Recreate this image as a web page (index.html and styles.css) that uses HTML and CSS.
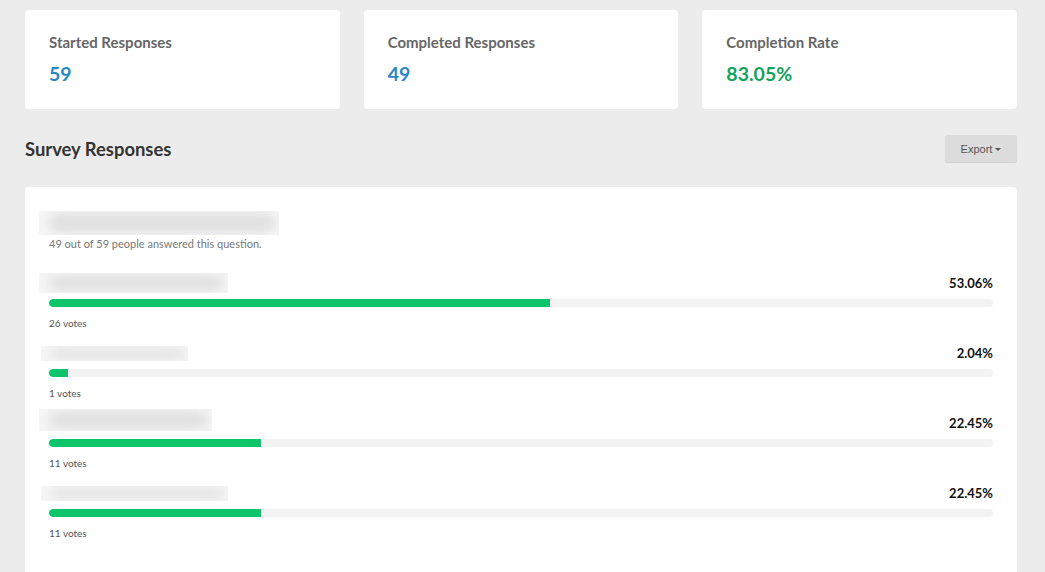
FILE: index.html
```html
<!DOCTYPE html>
<html>
  <head>
    <meta http-equiv="Content-Type" content="text/html; charset=UTF-8">
    <title>Survey Responses</title>
    <link rel="stylesheet" href="styles.css">
  </head>
  <body>
    <div class="stats">
      <div class="stat">
        <div class="stat_label">Started Responses</div>
        <div class="stat_value">59</div>
      </div>
      <div class="stat">
        <div class="stat_label">Completed Responses</div>
        <div class="stat_value">49</div>
      </div>
      <div class="stat">
        <div class="stat_label">Completion Rate</div>
        <div class="stat_value green">83.05%</div>
      </div>
    </div>

    <div class="section_head">
      <h2>Survey Responses</h2>
      <button class="export">Export <span class="caret"></span></button>
    </div>

    <div class="panel">
      <div class="blur question"><span></span></div>
      <p class="answered">49 out of 59 people answered this question.</p>

      <div class="option">
        <div class="option_top">
          <div class="blur" style="width:189px"><span></span></div>
          <b>53.06%</b>
        </div>
        <div class="bar"><div class="fill" style="width:53.06%"></div></div>
        <div class="votes">26 votes</div>
      </div>

      <div class="option">
        <div class="option_top">
          <div class="blur short" style="width:147px"><span></span></div>
          <b>2.04%</b>
        </div>
        <div class="bar"><div class="fill" style="width:2.04%"></div></div>
        <div class="votes">1 votes</div>
      </div>

      <div class="option">
        <div class="option_top">
          <div class="blur tall" style="width:173px"><span></span></div>
          <b>22.45%</b>
        </div>
        <div class="bar"><div class="fill" style="width:22.45%"></div></div>
        <div class="votes">11 votes</div>
      </div>

      <div class="option">
        <div class="option_top">
          <div class="blur short" style="width:187px"><span></span></div>
          <b>22.45%</b>
        </div>
        <div class="bar"><div class="fill" style="width:22.45%"></div></div>
        <div class="votes">11 votes</div>
      </div>
    </div>
  </body>
</html>
```

FILE: styles.css
```css
body {
  margin: 0;
  padding: 10px 28px 0 25px;
  background: #ececec;
  font-family: Lato, "Open Sans", sans-serif;
  color: #333;
  overflow: hidden;
}

.stats {
  display: grid;
  grid-template-columns: repeat(3, 1fr);
  gap: 24px;
}

.stat {
  background: #fff;
  border-radius: 4px;
  height: 99px;
  padding: 23px 24px 0 24px;
  box-sizing: border-box;
}

.stat_label {
  font-size: 15px;
  font-weight: bold;
  color: #666;
}

.stat_value {
  margin-top: 11px;
  font-size: 19.5px;
  font-weight: bold;
  color: #2a86c5;
}

.stat_value.green {
  color: #14a35a;
}

.section_head {
  display: flex;
  justify-content: space-between;
  align-items: center;
  margin: 26px 0 25px 0;
}

.section_head h2 {
  margin: 0;
  font-size: 18.4px;
  font-weight: bold;
  color: #333;
}

.export {
  width: 72px;
  height: 27px;
  border: 0;
  border-radius: 3px;
  background: #dcdcdc;
  box-shadow: 0 1px 1px rgba(0, 0, 0, 0.12);
  font-family: "Liberation Sans", Arial, sans-serif;
  font-size: 11px;
  color: #555;
  padding: 0;
}

.caret {
  display: inline-block;
  width: 0;
  height: 0;
  border-left: 3px solid transparent;
  border-right: 3px solid transparent;
  border-top: 3px solid #555;
  vertical-align: middle;
}

.panel {
  background: #fff;
  border-radius: 4px 4px 0 0;
  padding: 24px 24px 0 24px;
  height: 361px;
}

/* blurred answer text */
.blur {
  height: 20px;
  background: #f6f6f6;
  margin-left: -10px;
  overflow: hidden;
  position: relative;
  flex-shrink: 0;
}

.blur span {
  position: absolute;
  left: 10px;
  right: 4px;
  top: 3px;
  bottom: 3px;
  background: #dedede;
  border-radius: 8px;
  filter: blur(6px);
}

.blur.short {
  height: 15px;
  margin-left: -8px;
}

.blur.tall {
  height: 22px;
  margin-top: -6px;
}

.question {
  width: 240px;
  height: 24px;
}

.answered {
  margin: 2px 0 0 0;
  font-size: 11px;
  color: #777;
}

.option {
  margin-top: 22px;
}

.option + .option {
  margin-top: 13px;
}

.option_top {
  height: 22px;
  display: flex;
  justify-content: space-between;
  align-items: center;
}

.option_top b {
  font-size: 13px;
  color: #111;
}

.bar {
  margin-top: 5px;
  height: 8px;
  border-radius: 4px;
  background: #f3f3f3;
  overflow: hidden;
}

.fill {
  height: 100%;
  background: #0dc46a;
  border-radius: 4px 0 0 4px;
}

.votes {
  margin-top: 10px;
  height: 12px;
  line-height: 12px;
  font-size: 10px;
  color: #555;
}
```
